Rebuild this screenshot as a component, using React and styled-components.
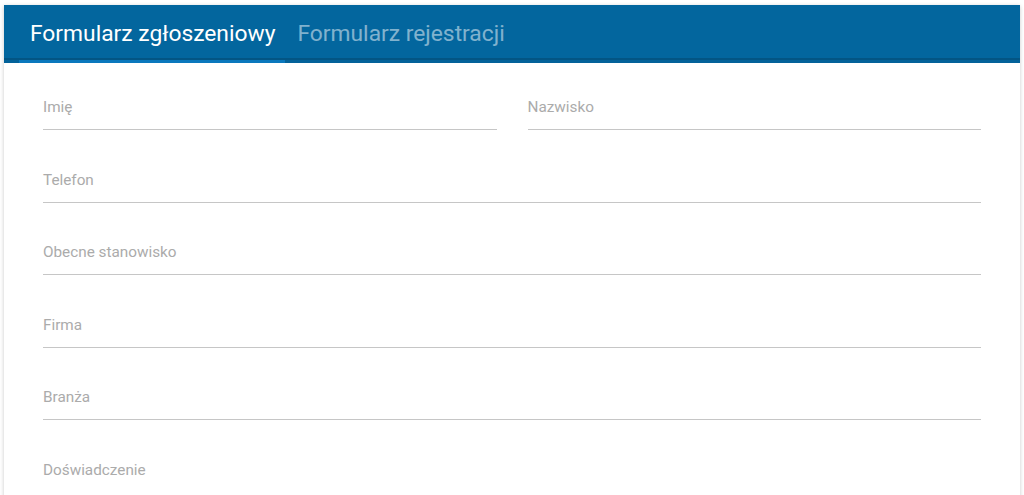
import React, { useState } from 'react';
import styled, { createGlobalStyle } from 'styled-components';

const GlobalStyle = createGlobalStyle`
  html, body {
    margin: 0;
    padding: 0;
    background: #ffffff;
    font-family: Roboto, "Liberation Sans", Arial, sans-serif;
    overflow: hidden;
  }
`;

const Page = styled.div`
  padding: 5px 4px 0 4px;
`;

const Card = styled.div`
  background: #ffffff;
  box-shadow: 0 1px 4px rgba(0, 0, 0, 0.22);
  min-height: 600px;
`;

const Header = styled.div`
  background: #03669e;
`;

const Tabs = styled.div`
  display: flex;
  height: 53px;
  padding-left: 15px;
  border-bottom: 2px solid #035584;
`;

const Tab = styled.button`
  background: none;
  border: none;
  padding: 4px 11px 0 11px;
  margin: 0;
  font-family: inherit;
  font-size: 22.8px;
  font-weight: 400;
  color: ${(p) => (p.active ? '#ffffff' : 'rgba(255, 255, 255, 0.5)')};
  cursor: pointer;
`;

const Strip = styled.div`
  display: flex;
  height: 3px;
  padding-left: 15px;
  background: #03629a;
`;

const Indicator = styled.div`
  width: ${(p) => p.w}px;
  background: #0a78bd;
`;

const Form = styled.form`
  display: flex;
  flex-direction: column;
  gap: 39.5px;
  padding: 34px 39px 0 39px;
`;

const Row = styled.div`
  display: grid;
  grid-template-columns: 1fr 1fr;
  column-gap: 31px;
`;

const Field = styled.label`
  display: block;
  padding-bottom: ${(p) => (p.tall ? '80px' : '12px')};
  border-bottom: 1px solid #c6c6c6;
`;

const Label = styled.span`
  display: block;
  height: 20px;
  line-height: 20px;
  font-size: 15.3px;
  color: #ababab;
`;

const fields = ['Telefon', 'Obecne stanowisko', 'Firma', 'Branża'];

export default function App() {
  const [tab, setTab] = useState(0);
  return (
    <Page>
      <GlobalStyle />
      <Card>
        <Header>
          <Tabs>
            <Tab active={tab === 0} onClick={() => setTab(0)}>
              Formularz zgłoszeniowy
            </Tab>
            <Tab active={tab === 1} onClick={() => setTab(1)}>
              Formularz rejestracji
            </Tab>
          </Tabs>
          <Strip>
            <Indicator w={266} />
          </Strip>
        </Header>
        <Form>
          <Row>
            <Field>
              <Label>Imię</Label>
            </Field>
            <Field>
              <Label>Nazwisko</Label>
            </Field>
          </Row>
          {fields.map((f) => (
            <Field key={f}>
              <Label>{f}</Label>
            </Field>
          ))}
          <Field tall>
            <Label>Doświadczenie</Label>
          </Field>
        </Form>
      </Card>
    </Page>
  );
}
